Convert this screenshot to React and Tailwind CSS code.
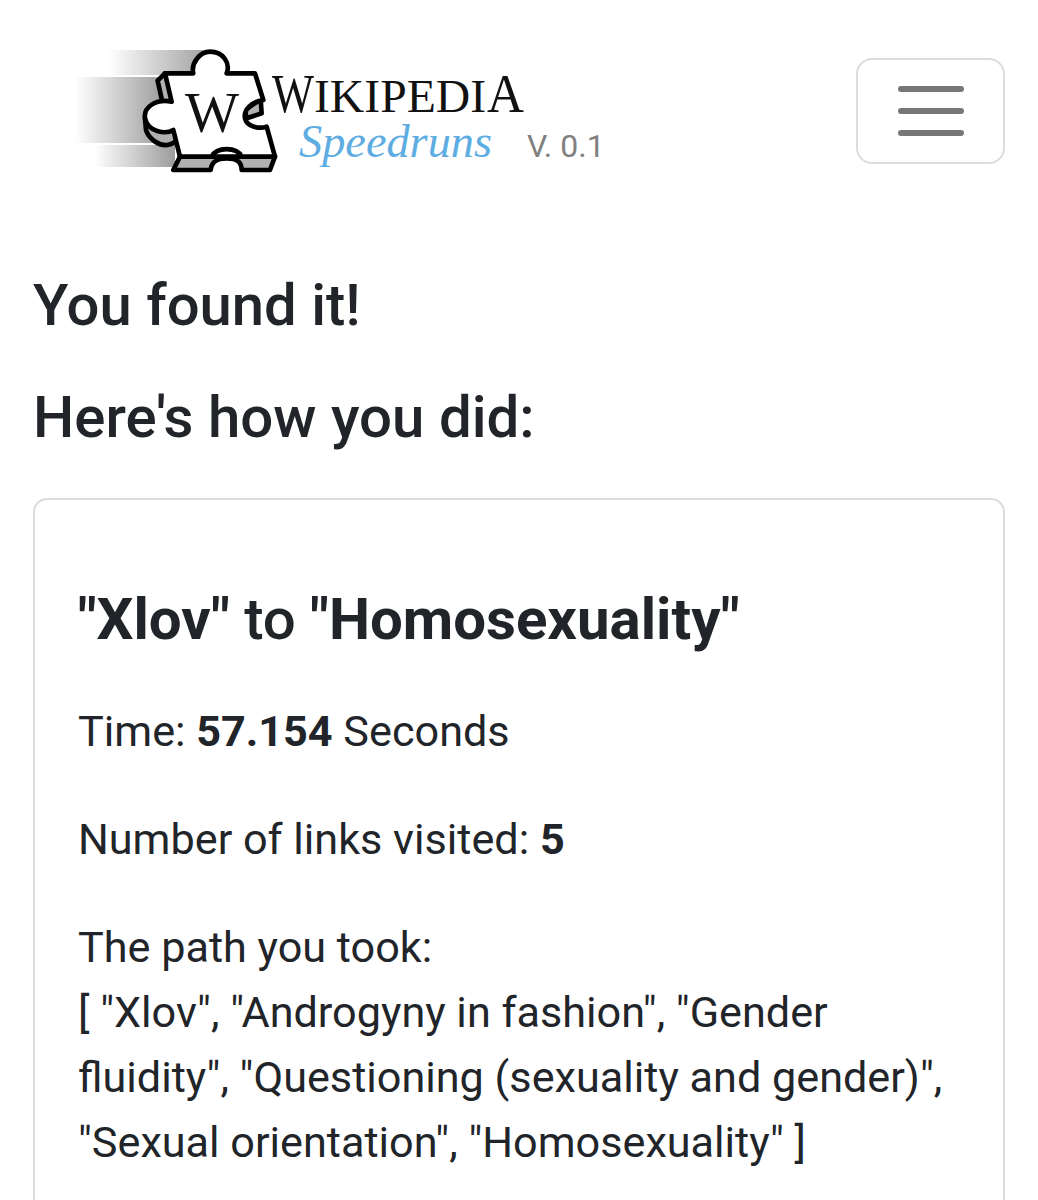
const serif = '"Liberation Serif", serif';

function Logo() {
    return (
        <svg width="460" height="130" viewBox="70 45 460 130" className="block shrink-0">
            <defs>
                <linearGradient id="speed" x1="0" x2="1" y1="0" y2="0">
                    <stop offset="0" stopColor="#ffffff" />
                    <stop offset="1" stopColor="#9c9c9c" />
                </linearGradient>
            </defs>
            <rect x="108" y="50" width="105" height="25" fill="url(#speed)" />
            <rect x="75" y="77" width="90" height="66" fill="url(#speed)" />
            <rect x="95" y="145" width="80" height="22" fill="url(#speed)" />
            {/* side of the piece */}
            <g transform="translate(60 30) scale(0.3333)" stroke="#000" strokeWidth="14" strokeLinejoin="round">
                <path
                    d="M315 130 L293 152 L307 215 L340 215 Z M255 265 L258 300 C265 325 295 348 322 345 C348 342 358 325 352 295 L300 280 Z M360 380 L340 420 L452 420 C455 395 470 385 500 385 C530 385 545 395 545 420 L630 420 L645 380 Z M602 208 L555 240 L560 265 L605 250 Z"
                    fill="#b0b0b0"
                />
                <path
                    d="M315 130 L400 130 C392 100 420 65 450 65 C490 65 512 100 500 130 L585 130 L610 210 C575 215 550 240 555 265 C560 292 600 297 620 290 L645 380 L545 380 C530 350 470 350 455 380 L360 380 L340 300 C320 312 265 310 255 265 C250 230 290 205 335 215 Z"
                    fill="#fff"
                />
            </g>
            <text x="185" y="132" fontFamily={serif} fontSize="56" fill="#111" textLength="54" lengthAdjust="spacingAndGlyphs">W</text>
            <text x="272" y="112" fontFamily={serif} fontSize="54" fill="#111" textLength="42" lengthAdjust="spacingAndGlyphs">W</text>
            <text x="314" y="112" fontFamily={serif} fontSize="47" fill="#111" textLength="172" lengthAdjust="spacingAndGlyphs">IKIPEDI</text>
            <text x="487" y="112" fontFamily={serif} fontSize="54" fill="#111" textLength="37" lengthAdjust="spacingAndGlyphs">A</text>
            <text x="299" y="157" fontFamily={serif} fontStyle="italic" fontSize="47" fill="#5dade2" textLength="193" lengthAdjust="spacingAndGlyphs">
                Speedruns
            </text>
        </svg>
    );
}

export default function App() {
    return (
        <div className="min-h-screen bg-white px-[33px] font-['Roboto',sans-serif] text-[#212529] overflow-hidden h-[1200px]">
            {/* Navbar */}
            <div className="flex items-center justify-between pt-[45px]">
                <div className="flex items-end ml-[37px]">
                    <Logo />
                    <span className="text-[32px] leading-none text-[#808080] -ml-[3px] mb-[13px] whitespace-nowrap">V. 0.1</span>
                </div>
                <button className="w-[149px] h-[106px] mt-[2px] border-2 border-[#dcdcdc] rounded-[16px] flex flex-col items-center justify-center gap-[16px]">
                    <span className="block w-[66px] h-[6px] rounded-full bg-[#777777]"></span>
                    <span className="block w-[66px] h-[6px] rounded-full bg-[#777777]"></span>
                    <span className="block w-[66px] h-[6px] rounded-full bg-[#777777]"></span>
                </button>
            </div>

            <h2 className="text-[58px] leading-[72px] font-medium mt-[94px]">You found it!</h2>
            <h3 className="text-[58.2px] leading-[65px] font-medium mt-[44px]">Here's how you did:</h3>

            {/* Result card */}
            <div className="mt-[48px] border-2 border-[#dcdcdc] rounded-[14px] px-[43px] pt-[87px] pb-[40px] h-[800px]">
                <h4 className="text-[58.2px] leading-[65px] font-medium">
                    <b className="font-bold">"Xlov"</b> to <b className="font-bold">"Homosexuality"</b>
                </h4>
                <p className="text-[43.2px] leading-[65px] mt-[47px]">
                    Time: <b className="font-bold">57.154</b> Seconds
                </p>
                <p className="text-[43.2px] leading-[65px] mt-[43px]">
                    Number of links visited: <b className="font-bold">5</b>
                </p>
                <p className="text-[43.2px] leading-[65px] mt-[43px]">
                    The path you took:
                    <br />
                    [ "Xlov", "Androgyny in fashion", "Gender fluidity", "Questioning (sexuality and gender)", "Sexual orientation", "Homosexuality" ]
                </p>
            </div>
        </div>
    );
}
